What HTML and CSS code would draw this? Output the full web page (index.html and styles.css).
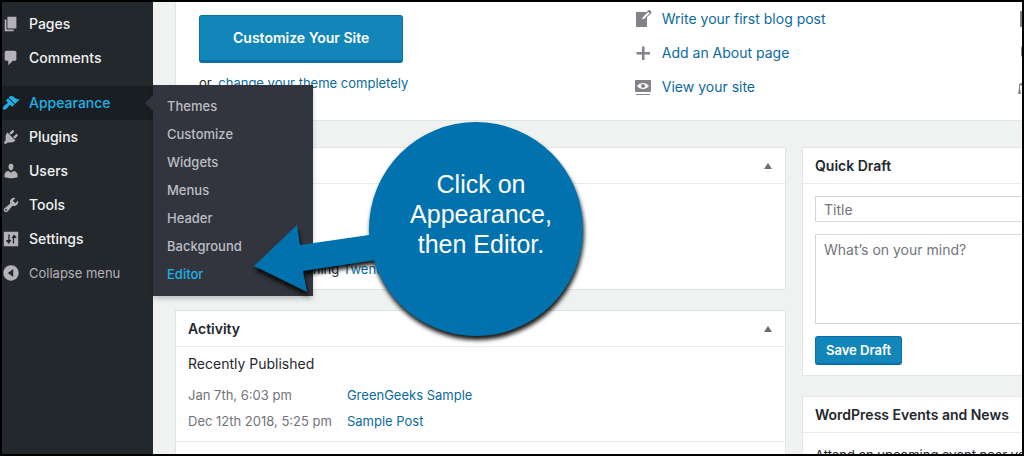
FILE: index.html
```html
<!DOCTYPE html>
<html lang="en">
<head>
  <meta charset="UTF-8" />
  <meta name="viewport" content="width=device-width, initial-scale=1.0"/>
  <title>Dashboard</title>
  <link rel="stylesheet" href="styles.css">
</head>
<body>
  <div class="screen">
    <nav class="sidebar">
      <ul class="menu">
        <li><a class="menu-link" href="#">
          <svg class="icon" viewBox="0 0 20 20"><path d="M6 15V2h10v13H6zm-1 1h8v2H3V5h2v11z"/></svg>Pages</a></li>
        <li><a class="menu-link" href="#">
          <svg class="icon" viewBox="0 0 20 20"><path d="M5 2h9c1.1 0 2 .9 2 2v7c0 1.1-.9 2-2 2h-2l-5 5v-5H5c-1.1 0-2-.9-2-2V4c0-1.1.9-2 2-2z"/></svg>Comments</a></li>
        <li class="separator"></li>
        <li class="current">
          <a class="menu-link" href="#">
            <svg class="icon" viewBox="0 0 20 20"><path d="M14.48 11.06L7.41 3.99l1.5-1.5c.5-.56 2.3-.47 3.51.32 1.21.8 1.43 1.28 2.91 2.1 1.18.64 2.45 1.26 4.45.85zm-.71.71L6.7 4.7 4.93 6.47c-.39.39-.39 1.02 0 1.41l1.06 1.06c.39.39.39 1.03 0 1.42-.6.6-1.43 1.11-2.21 1.69-.35.26-.7.53-1.01.84C1.43 14.23.4 16.08 1.4 17.07c.99 1 2.84-.03 4.18-1.36.31-.31.58-.66.85-1.02.57-.78 1.08-1.61 1.69-2.21.39-.39 1.02-.39 1.41 0l1.06 1.06c.39.39 1.02.39 1.41 0z"/></svg>Appearance</a>
          <ul class="submenu">
            <li><a href="#">Themes</a></li>
            <li><a href="#">Customize</a></li>
            <li><a href="#">Widgets</a></li>
            <li><a href="#">Menus</a></li>
            <li><a href="#">Header</a></li>
            <li><a href="#">Background</a></li>
            <li><a class="active" href="#">Editor</a></li>
          </ul>
        </li>
        <li><a class="menu-link" href="#">
          <svg class="icon" viewBox="0 0 20 20"><path d="M13.11 4.36L9.87 7.6 8 5.73l3.24-3.24c.35-.34 1.05-.2 1.56.32.52.51.66 1.21.31 1.55zm-8 1.77l.91-1.12 9.01 9.01-1.19.84c-.71.71-2.63 1.16-3.82 1.16H6.14L4.9 17.26c-.59.59-1.54.59-2.12 0-.59-.58-.59-1.53 0-2.12l1.24-1.24v-3.88c0-1.13.4-3.19 1.09-3.89zm7.26 3.97l3.24-3.24c.34-.35 1.04-.21 1.55.31.52.51.66 1.21.31 1.55l-3.24 3.25z"/></svg>Plugins</a></li>
        <li><a class="menu-link" href="#">
          <svg class="icon" viewBox="0 0 20 20"><path d="M10 9.25c-2.27 0-2.73-3.44-2.73-3.44C7 4.02 7.82 2 9.97 2c2.16 0 2.98 2.02 2.71 3.81 0 0-.41 3.44-2.68 3.44zm0 2.57L12.72 10c2.39 0 4.52 2.33 4.52 4.53v2.49s-3.65 1.13-7.24 1.13c-3.65 0-7.24-1.13-7.24-1.13v-2.49c0-2.25 1.94-4.48 4.47-4.48z"/></svg>Users</a></li>
        <li><a class="menu-link" href="#">
          <svg class="icon" viewBox="0 0 20 20"><path d="M16.68 9.77c-1.34 1.34-3.3 1.67-4.95.99l-5.41 6.52c-.99.99-2.59.99-3.58 0s-.99-2.59 0-3.57l6.52-5.42c-.68-1.65-.35-3.61.99-4.95 1.28-1.28 3.12-1.62 4.72-1.06l-2.89 2.89 2.82 2.82 2.86-2.87c.53 1.58.18 3.39-1.08 4.65zM3.81 16.21c.4.39 1.04.39 1.43 0 .4-.4.4-1.04 0-1.43-.39-.4-1.03-.4-1.43 0-.39.39-.39 1.03 0 1.43z"/></svg>Tools</a></li>
        <li><a class="menu-link" href="#">
          <svg class="icon" viewBox="0 0 20 20"><path fill-rule="evenodd" d="M2 2h16v16H2zM7 5v6H4.500v1L7.500 15.500 10 12v-1H8.500V5zM12 15h1.500V9H16V8l-2.500-3L11 8v1h1z"/></svg>Settings</a></li>
        <li><button class="menu-link collapse" type="button">
          <svg class="icon" viewBox="0 0 20 20"><path fill-rule="evenodd" d="M10 1.500c4.700 0 8.500 3.800 8.500 8.500s-3.800 8.500-8.500 8.500-8.500-3.800-8.500-8.500 3.800-8.500 8.500-8.500zm2.500 13v-9L6.500 10z"/></svg>Collapse menu</button></li>
      </ul>
    </nav>

    <main class="content">
      <div class="dashboard">
        <section class="welcome">
          <div class="welcome-start">
            <button class="btn btn-hero" type="button">Customize Your Site</button>
            <p class="theme-note">or, <a href="#">change your theme completely</a></p>
          </div>
          <ul class="steps">
            <li><svg class="icon" viewBox="0 0 20 20"><path d="M16.89 1.200l1.410 1.410c.39.39.39 1.020 0 1.410L14 8.330V18H3V3h10.670l1.800-1.800c.4-.39 1.030-.4 1.420 0zm-5.660 8.480l5.370-5.360-1.420-1.420-5.360 5.370-.71 2.120z"/></svg><a href="#">Write your first blog post</a></li>
            <li><svg class="icon" viewBox="0 0 20 20"><path d="M17 9v2.500h-5.500V17H9v-5.500H3.500V9H9V3.500h2.500V9z"/></svg><a href="#">Add an About page</a></li>
            <li><svg class="icon" viewBox="0 0 20 20"><path d="M18 14V4c0-.55-.45-1-1-1H3c-.55 0-1 .45-1 1v10c0 .55.45 1 1 1h14c.55 0 1-.45 1-1zm-8-8c2.300 0 4.400 1.140 6 3-1.600 1.860-3.700 3-6 3s-4.400-1.140-6-3c1.600-1.860 3.700-3 6-3zm2 3c0-1.100-.9-2-2-2s-2 .9-2 2 .9 2 2 2 2-.9 2-2zm2 8h3v1H3v-1h11z"/></svg><a href="#">View your site</a></li>
          </ul>
          <ul class="steps">
            <li><svg class="icon" viewBox="0 0 20 20"><path fill-rule="evenodd" d="M2 2h16v16H2zM4 5v2h5V5zM4 9v2h5V9zM4 13v2h5v-2z"/></svg></li>
            <li><svg class="icon" viewBox="0 0 20 20"><path d="M5 3h10q2 0 2 2v7q0 2-2 2h-3l-4 4v-4H5q-2 0-2-2V5q0-2 2-2z"/></svg></li>
            <li><svg class="icon" viewBox="0 0 20 20"><path d="M10 3l10 4-10 4-8-3v3l1 6H0l1-6V7zM4 11l6 3 6-3v4q-6 4-12 0z"/></svg></li>
          </ul>
        </section>

        <div class="columns">
          <div class="column">
            <section class="box">
              <header class="box-head">
                <h2>At a Glance</h2>
                <button class="toggle" type="button" aria-label="Toggle panel"></button>
              </header>
              <div class="box-body glance">
                <p>WordPress 5.0.3 running <a href="#">Twenty Seventeen</a> theme.</p>
              </div>
            </section>
            <section class="box">
              <header class="box-head">
                <h2>Activity</h2>
                <button class="toggle" type="button" aria-label="Toggle panel"></button>
              </header>
              <div class="box-body activity">
                <h3>Recently Published</h3>
                <table class="posts">
                  <tr><td>Jan 7th, 6:03 pm</td><td><a href="#">GreenGeeks Sample</a></td></tr>
                  <tr><td>Dec 12th 2018, 5:25 pm</td><td><a href="#">Sample Post</a></td></tr>
                </table>
              </div>
              <div class="box-body"></div>
            </section>
          </div>

          <div class="column">
            <section class="box">
              <header class="box-head"><h2>Quick Draft</h2></header>
              <form class="box-body draft">
                <input type="text" placeholder="Title" aria-label="Title">
                <textarea placeholder="What’s on your mind?" aria-label="Content"></textarea>
                <button class="btn" type="button">Save Draft</button>
              </form>
            </section>
            <section class="box">
              <header class="box-head"><h2>WordPress Events and News</h2></header>
              <div class="box-body events">
                <p>Attend an upcoming event near you.</p>
              </div>
            </section>
          </div>
        </div>
      </div>
    </main>

    <!-- Tutorial callout -->
    <div class="callout">
      <svg class="callout-shape" viewBox="0 0 340 230">
        <path d="M6 152L49 111L52 131L128 120L128 146L55 157L59 178Z"/>
        <circle cx="228" cy="115" r="107"/>
      </svg>
      <p class="callout-text">Click on<br>Appearance,<br>then Editor.</p>
    </div>
  </div>
</body>
</html>
```

FILE: styles.css
```css
* {
  box-sizing: border-box;
}

body {
  margin: 0;
  font-family: Inter, "Liberation Sans", sans-serif;
  font-size: 13px;
  line-height: 20px;
  color: #23282d;
}

ul, p, h2, h3 {
  margin: 0;
  padding: 0;
  list-style: none;
}

a {
  color: #0b6a9d;
  text-decoration: none;
}

button, input, textarea {
  font: inherit;
}

.screen {
  position: relative;
  display: flex;
  height: 100vh;
  border: 2px solid #000;
  background: #f0f2f2;
  overflow: hidden;
}

.icon {
  width: 20px;
  height: 20px;
  flex: none;
  fill: currentColor;
}

/* Sidebar */
.sidebar {
  position: relative;
  z-index: 1;
  flex: 0 0 151px;
  padding-top: 5px;
  background: #23282d;
}

.menu-link {
  display: flex;
  align-items: center;
  gap: 9px;
  width: 100%;
  height: 34px;
  font-size: 14px;
  font-weight: 500;
  color: #f2f2f2;
}

.menu-link .icon {
  width: 18px;
  height: 18px;
  color: #b4b2b8;
}

.separator {
  height: 11px;
}

.current {
  position: relative;
  background: #191e23;
}

.current .menu-link,
.current .menu-link .icon {
  color: #1fb0e6;
}

.current::after {
  content: "";
  position: absolute;
  right: 0;
  top: 9px;
  border: 8px solid transparent;
  border-left-width: 0;
  border-right-color: #32353d;
}

.collapse {
  padding: 0;
  border: 0;
  background: none;
  font-size: 13px;
  font-weight: 400;
  color: #b4b2b8;
}

.submenu {
  position: absolute;
  left: 100%;
  top: -1px;
  width: 160px;
  padding: 7px 0 8px;
  background: #32353d;
  box-shadow: 0 3px 5px rgba(0, 0, 0, 0.2);
}

.submenu a {
  display: block;
  padding: 4px 14px;
  font-weight: 500;
  color: #bebdc4;
}

.submenu .active {
  color: #1fb0e6;
}

/* Dashboard, runs past the right edge of the window */
.content {
  flex: 1;
  min-width: 0;
  padding-left: 22px;
}

.dashboard {
  margin-right: -391px;
}

.welcome {
  display: grid;
  grid-template-columns: 36fr 32fr 32fr;
  height: 119px;
  padding: 0 8px 0 23px;
  border: 1px solid #e2e5e5;
  border-top: 0;
  background: #fff;
}

.btn {
  height: 29px;
  padding: 0 10px;
  border: 1px solid #0b6ea5;
  border-bottom-width: 2px;
  border-radius: 3px;
  background: #1286b9;
  font-weight: 600;
  color: #fff;
}

.welcome-start {
  padding-top: 13px;
}

.btn-hero {
  height: 48px;
  padding: 0 33px;
  border-bottom-width: 3px;
  font-size: 14px;
}

.theme-note {
  padding-top: 10px;
}

.steps li {
  display: flex;
  align-items: center;
  gap: 9px;
  height: 34px;
  font-size: 14px;
  color: #85808a;
}

.columns {
  display: grid;
  grid-template-columns: 1fr 1fr;
  gap: 16px;
  padding-top: 26px;
}

.column {
  display: flex;
  flex-direction: column;
  gap: 20px;
}

.box {
  border: 1px solid #e2e5e5;
  background: #fff;
}

.box-head {
  display: flex;
  justify-content: space-between;
  align-items: center;
  height: 36px;
  padding: 0 13px 0 12px;
  border-bottom: 1px solid #eaeaea;
}

.box-head h2 {
  font-size: 14px;
  font-weight: 600;
}

.toggle {
  padding: 0;
  border: 4px solid transparent;
  border-top: 0;
  border-bottom: 6px solid #6d6a78;
  background: none;
}

.box-body {
  padding: 12px;
}

.glance {
  padding: 75px 12px 10px;
}

.activity {
  padding: 7px 12px;
  border-bottom: 1px solid #eaeaea;
}

.activity h3 {
  font-size: 14px;
  font-weight: 400;
}

.posts {
  margin-top: 8px;
  border-collapse: collapse;
}

.posts td {
  padding: 3px 15px 3px 0;
  color: #72727a;
}

.draft {
  display: flex;
  flex-direction: column;
  align-items: flex-start;
  gap: 12px;
  padding-bottom: 10px;
}

.draft input,
.draft textarea {
  width: 100%;
  border: 1px solid #d2d6d8;
  padding: 2px 8px;
  background: #fff;
  font-size: 14px;
}

.draft input {
  height: 26px;
}

.draft textarea {
  height: 90px;
  padding-top: 5px;
  resize: none;
}

.draft ::placeholder {
  color: #72757c;
}

/* Callout */
.callout {
  position: absolute;
  z-index: 2;
  left: 246px;
  top: 112px;
  width: 340px;
}

.callout-shape {
  display: block;
  fill: #0272ae;
  overflow: visible;
  filter: drop-shadow(1px 4px 2px rgba(0, 0, 0, 0.9));
}

.callout-text {
  position: absolute;
  left: 126px;
  top: 55px;
  width: 214px;
  font-family: "Liberation Sans", Arial, sans-serif;
  font-size: 25px;
  line-height: 30px;
  text-align: center;
  color: #fff;
}
```
